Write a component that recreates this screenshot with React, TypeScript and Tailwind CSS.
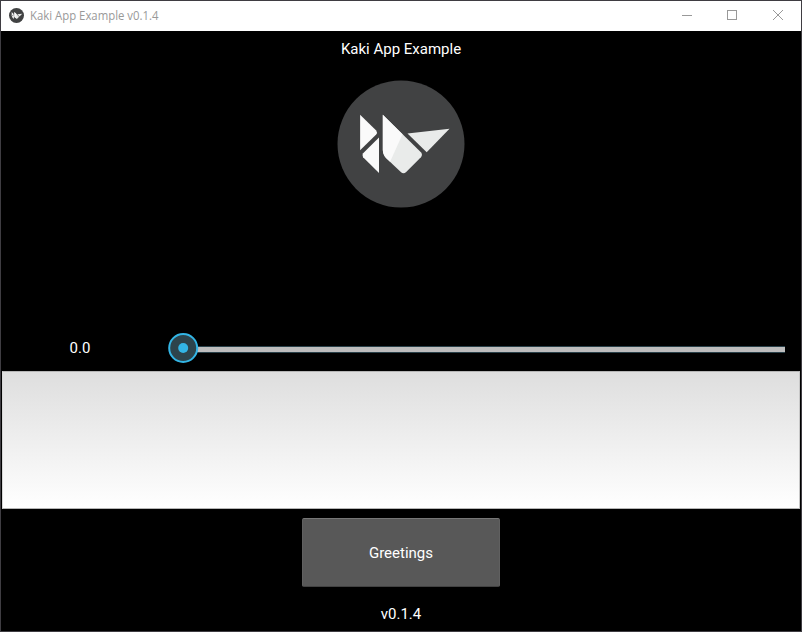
function KivyMark() {
  return (
    <>
      <circle cx="63.5" cy="63.5" r="63.5" fill="#414243" />
      <path d="M22.6 34.2 L38.7 50 Q40.2 52 38.7 54 L22.6 69.8 Z" fill="#fafafa" />
      <path d="M41.5 57 V92.6 L25.6 76.8 Q24.2 74.8 25.6 72.8 Z" fill="#fafafa" />
      <path d="M45.3 34.2 L83.4 71.8 Q85.5 74.3 83.4 76.8 L68.7 91.5 Q66 94 63.3 91.5 L48.5 77.5 Q45.3 74 45.3 69 Z" fill="#e9ebea" />
      <path d="M45.3 34.2 L65 53.7 L52.6 81.3 L48.5 77.5 Q45.3 74 45.3 69 Z" fill="#fafafa" />
      <path d="M70 53 L112 48.2 L89.2 71.8 Z" fill="#e9ebea" />
    </>
  );
}

function TitleBar() {
  return (
    <header className="flex h-[30px] shrink-0 items-center bg-white pl-2">
      <svg className="mb-px size-[15px] shrink-0" viewBox="0 0 127 127">
        <KivyMark />
      </svg>
      <svg className="ml-[6px] h-[30px] w-[140px] shrink-0">
        <text x="0" y="19" textLength="128.5" lengthAdjust="spacingAndGlyphs" className="fill-[#999999] font-['Open_Sans',sans-serif] text-[12px]">
          Kaki App Example v0.1.4
        </text>
      </svg>
      <svg className="ml-auto h-[30px] w-[138px]" fill="none" stroke="#999999">
        <path d="M19 14.5h10" />
        <rect x="64.5" y="9.5" width="9" height="9" />
        <path d="M110 9l10 10M120 9l-10 10" />
      </svg>
    </header>
  );
}

export default function App() {
  return (
    <div className="flex h-[632px] w-[802px] flex-col border border-[#3f3d42] bg-black font-['Roboto',sans-serif] text-[15px] leading-[18px] text-white">
      <TitleBar />
      <h1 className="mt-[9px] h-[18px] text-center">Kaki App Example</h1>
      <svg className="mt-[22px] size-32 shrink-0 self-center" viewBox="-0.5 -0.5 128 128">
        <KivyMark />
      </svg>
      <div className="mt-[118px] flex h-11 shrink-0 items-center">
        <span className="w-[158px] text-center">0.0</span>
        <svg className="h-11 w-[642px]">
          <rect x="24" y="20" width="602" height="7" fill="#294049" />
          <rect x="24" y="21" width="602" height="5" fill="#bdbdbd" />
          <circle cx="24.2" cy="22" r="14" fill="#2d444c" stroke="#33b5e5" strokeWidth="2" />
          <circle cx="24.2" cy="22" r="5" fill="#33b5e5" />
        </svg>
      </div>
      <textarea className="mx-px mt-px h-[138px] shrink-0 resize-none border border-t-[#b5b5b5] border-r-[#c8c8c8] border-b-[#b5b5b5] border-l-[#d8d8d8] bg-linear-to-b from-[#dedede] to-white p-1 text-black outline-none" />
      <button className="mt-[9px] h-[69px] w-[198px] shrink-0 self-center rounded-[2px] border border-t-[#777777] border-r-[#606060] border-b-[#424242] border-l-[#606060] bg-[#585858]">
        Greetings
      </button>
      <p className="mt-[18px] text-center">v0.1.4</p>
    </div>
  );
}
